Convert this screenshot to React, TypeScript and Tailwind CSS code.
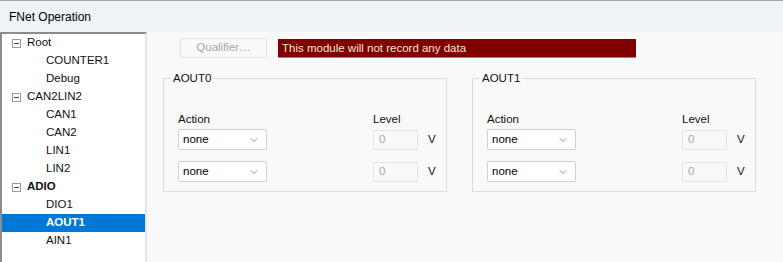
import { ChevronDown } from "lucide-react";

type Node = { label: string; depth: 0 | 1; bold?: boolean; selected?: boolean };

const tree: Node[] = [
  { label: "Root", depth: 0 },
  { label: "COUNTER1", depth: 1 },
  { label: "Debug", depth: 1 },
  { label: "CAN2LIN2", depth: 0 },
  { label: "CAN1", depth: 1 },
  { label: "CAN2", depth: 1 },
  { label: "LIN1", depth: 1 },
  { label: "LIN2", depth: 1 },
  { label: "ADIO", depth: 0, bold: true },
  { label: "DIO1", depth: 1 },
  { label: "AOUT1", depth: 1, bold: true, selected: true },
  { label: "AIN1", depth: 1 },
];

const Collapse = () => (
  <span className="w-[9px] h-[9px] border border-[#9a9a9a] bg-white flex items-center justify-center">
    <span className="w-[5px] h-px bg-[#444]" />
  </span>
);

const Combo = () => (
  <div className="w-[89px] h-[21px] bg-white border border-[#d0d0d0] rounded-[2px] flex items-center justify-between pl-[4px] pr-[6px]">
    <span className="text-[#000]">none</span>
    <ChevronDown className="size-[12px] text-[#555]" strokeWidth={1.25} />
  </div>
);

const LevelRow = () => (
  <div className="flex items-center">
    <Combo />
    <div className="ml-[106px] w-[45px] h-[20px] border border-[#e2e2e2] rounded-[2px] flex items-center pl-[5px] text-[#a8a8a8]">
      0
    </div>
    <span className="ml-[10px]">V</span>
  </div>
);

const Group = ({ title }: { title: string }) => (
  <div className="relative w-[284px] h-[114px] border border-[#dcdcdc] pl-[14px] pt-[33px]">
    <span className="absolute left-[7px] top-[-8px] px-[2px] leading-[14px] bg-[#f9f9f9]">{title}</span>
    <div className="flex leading-[14px]">
      <span className="w-[195px]">Action</span>
      <span>Level</span>
    </div>
    <div className="mt-[3px] flex flex-col gap-[11px]">
      <LevelRow />
      <LevelRow />
    </div>
  </div>
);

export default function App() {
  return (
    <div
      className="w-[783px] h-[262px] bg-[#f9f9f9] text-[11.5px] text-[#111] flex flex-col border-t border-[#a8a8a8] overflow-hidden"
      style={{ fontFamily: '"Liberation Sans", Arial, sans-serif' }}
    >
      <div className="h-[31px] bg-[#eef3f8] flex items-center pl-[9px] text-[12px] text-black">FNet Operation</div>
      <div className="flex flex-1">
        <div className="w-[147px] border-t-2 border-l-2 border-[#8c8c8c] border-r-2 border-r-[#e6e6e6] bg-white">
          {tree.map((n) => (
            <div
              key={n.label}
              className={`h-[18px] flex items-center ${n.selected ? "bg-[#0078d7] text-white" : ""} ${n.bold ? "font-bold" : ""}`}
            >
              {n.depth === 0 ? (
                <>
                  <span className="ml-[10px] w-[15px]">
                    <Collapse />
                  </span>
                  <span>{n.label}</span>
                </>
              ) : (
                <span className="ml-[44px]">{n.label}</span>
              )}
            </div>
          ))}
        </div>
        <div className="flex-1 pl-[16px] pt-[6px]">
          <div className="flex items-center ml-[17px]">
            <button
              disabled
              className="w-[87px] h-[20px] border border-[#e3e3e3] rounded-[3px] bg-[#f9f9f9] text-[#a5a5a5]"
            >
              Qualifier…
            </button>
            <div className="ml-[11px] w-[358px] h-[19px] bg-[#800000] border-b border-[#8a8a8a] text-[#f5e6d0] pl-[4px] leading-[18px] outline outline-1 outline-white">
              This module will not record any data
            </div>
          </div>
          <div className="flex gap-[25px] mt-[20px]">
            <Group title="AOUT0" />
            <Group title="AOUT1" />
          </div>
        </div>
      </div>
    </div>
  );
}
